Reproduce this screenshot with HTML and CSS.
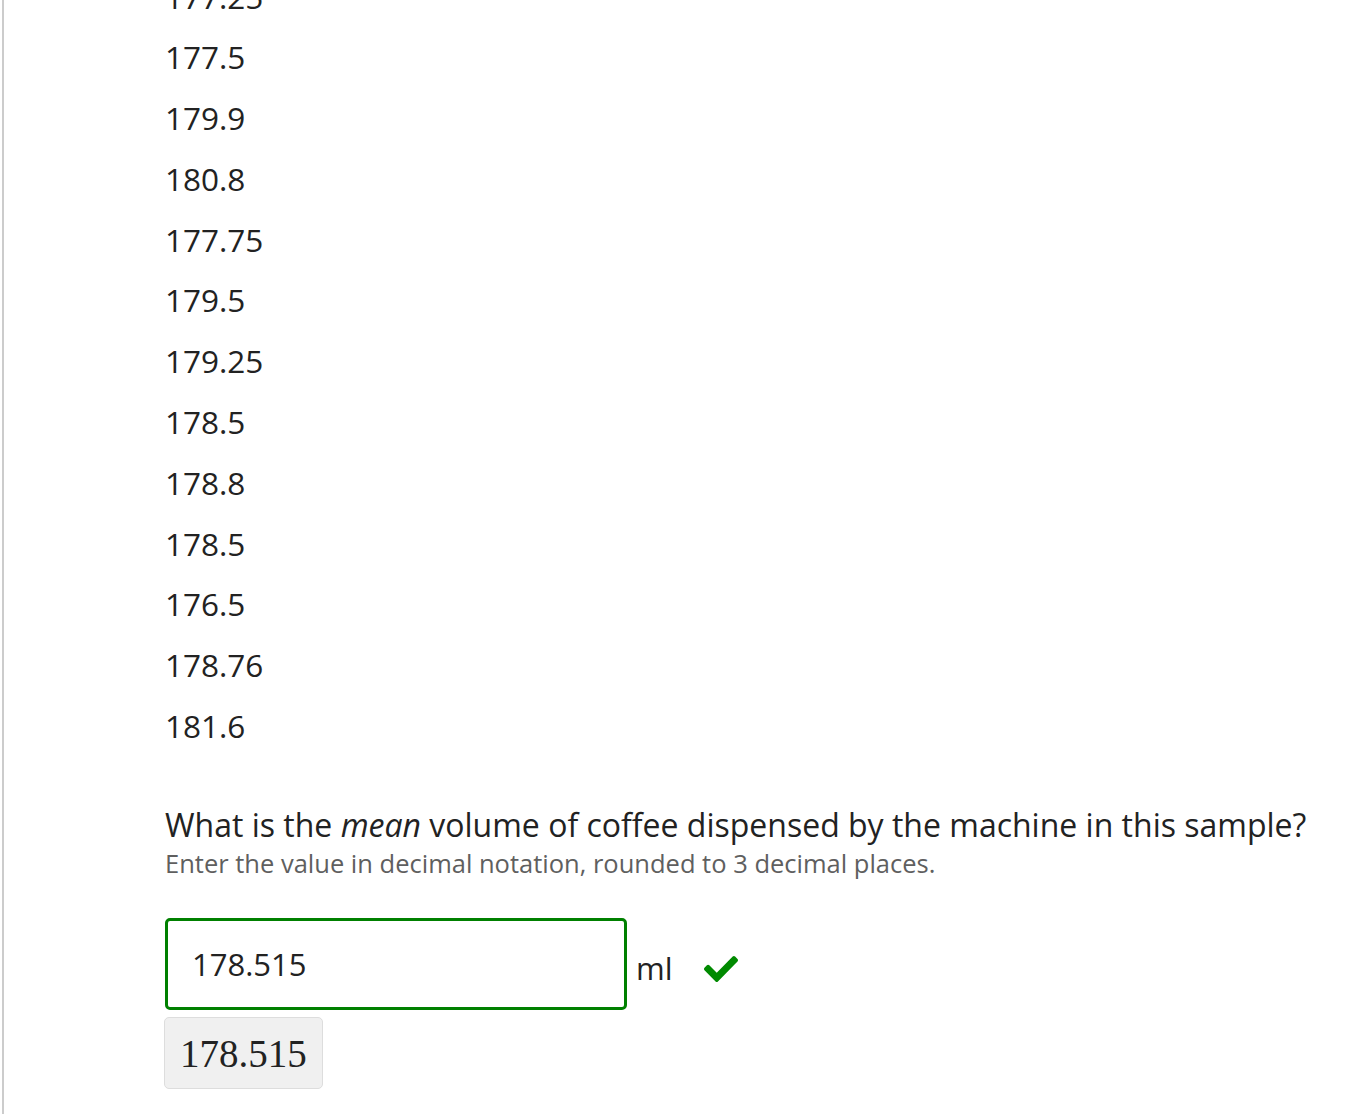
FILE: index.html
```html
<!DOCTYPE html>
<html lang="en">
<head>
<meta charset="utf-8">
<title>Question</title>
<link rel="stylesheet" href="styles.css">
</head>
<body>
<div class="page">
  <div class="content">
    <ul class="values">
      <li>177.25</li>
      <li>177.5</li>
      <li>179.9</li>
      <li>180.8</li>
      <li>177.75</li>
      <li>179.5</li>
      <li>179.25</li>
      <li>178.5</li>
      <li>178.8</li>
      <li>178.5</li>
      <li>176.5</li>
      <li>178.76</li>
      <li>181.6</li>
    </ul>
    <p class="question">What is the <em>mean</em> volume of coffee dispensed by the machine in this sample?</p>
    <p class="hint">Enter the value in decimal notation, rounded to 3 decimal places.</p>
    <div class="answer-row">
      <div class="answer-input">178.515</div>
      <span class="unit">ml</span>
      <svg class="check" viewBox="0 65 512 382" width="34" height="26" preserveAspectRatio="none" aria-hidden="true"><path fill="#008a00" d="M173.898 439.404l-166.4-166.4c-9.997-9.997-9.997-26.206 0-36.204l36.203-36.204c9.997-9.998 26.207-9.998 36.204 0L192 312.69 432.095 72.596c9.997-9.997 26.207-9.997 36.204 0l36.203 36.204c9.997 9.997 9.997 26.206 0 36.204l-294.4 294.401c-9.998 9.997-26.207 9.997-36.204-.001z"/></svg>
    </div>
    <div class="preview">178.515</div>
  </div>
</div>
</body>
</html>
```

FILE: styles.css
```css
html, body {
  margin: 0;
  padding: 0;
  background: #ffffff;
  overflow: hidden;
}

body {
  font-family: "Open Sans", "Noto Sans", sans-serif;
  color: #222222;
}

.page {
  display: flow-root;
  margin-left: 2px;
  border-left: 2px solid #cccccc;
  min-height: 1200px;
}

.content {
  padding-left: 161px;
}

.values {
  list-style: none;
  margin: -33.5px 0 0 0;
  padding: 0;
  font-size: 31.5px;
  line-height: 60.8px;
}

.question {
  margin: 50px 0 0 0;
  font-size: 32px;
  line-height: 36px;
  color: #222222;
}

.question em {
  font-style: italic;
}

.hint {
  margin: 7px 0 0 0;
  font-size: 25.5px;
  line-height: 27px;
  color: #5f5f5f;
}

.answer-row {
  display: flex;
  align-items: center;
  margin-top: 41.5px;
}

.answer-input {
  box-sizing: border-box;
  width: 462px;
  height: 92px;
  border: 3px solid #008000;
  border-radius: 5px;
  padding-left: 24px;
  display: flex;
  align-items: center;
  font-size: 31px;
  line-height: 40px;
  color: #222222;
}

.unit {
  margin-left: 9px;
  padding-top: 7px;
  font-size: 31px;
  line-height: 40px;
  color: #222222;
}

.check {
  display: block;
  margin-left: 31px;
  margin-top: 9px;
}

.preview {
  display: inline-flex;
  align-items: center;
  box-sizing: border-box;
  height: 72px;
  margin-top: 7px;
  margin-left: -1px;
  padding: 0 15px 0 15px;
  background: #f0f0f0;
  border: 1px solid #dddddd;
  border-radius: 5px;
  font-family: "Liberation Serif", "DejaVu Serif", serif;
  font-size: 39px;
  line-height: 43px;
  color: #222222;
}
```
